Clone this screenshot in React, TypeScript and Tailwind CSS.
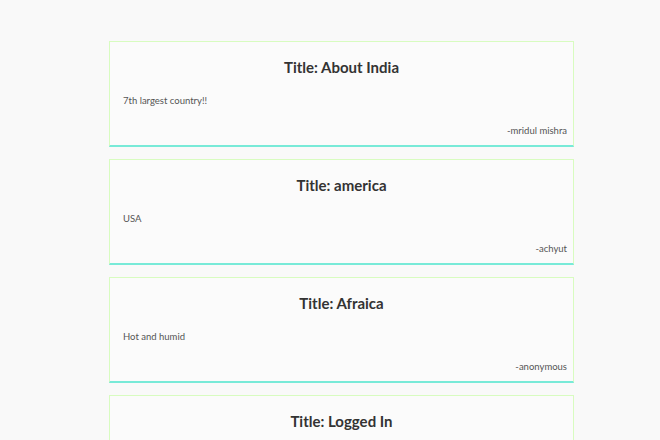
const notes = [
  { title: "About India", body: "7th largest country!!", author: "mridul mishra" },
  { title: "america", body: "USA", author: "achyut" },
  { title: "Afraica", body: "Hot and humid", author: "anonymous" },
  { title: "Logged In", body: "", author: "" },
]

function NoteCard({ title, body, author }: { title: string; body: string; author: string }) {
  return (
    <div className="flex h-[106px] shrink-0 flex-col border border-b-2 border-[#d8fcc0] border-b-[#78ead8] bg-[#fbfbfb]">
      <h2 className="pt-[15px] text-center text-[15px] font-bold leading-[20px] text-[#333]">Title: {title}</h2>
      <p className="mt-[17px] px-[13px] text-[9.5px] leading-[14px] text-[#555]">{body}</p>
      <p className="mt-auto mb-[7px] px-[6px] text-right text-[9.5px] leading-[14px] text-[#555]">
        {author && `-${author}`}
      </p>
    </div>
  )
}

export default function App() {
  return (
    <div className="h-[440px] overflow-hidden bg-[#f9f9f9] font-['Lato','Noto_Sans',sans-serif]">
      <div className="ml-[109px] flex w-[465px] flex-col gap-[12px] pt-[41px]">
        {notes.map((n) => (
          <NoteCard key={n.title} {...n} />
        ))}
      </div>
    </div>
  )
}
